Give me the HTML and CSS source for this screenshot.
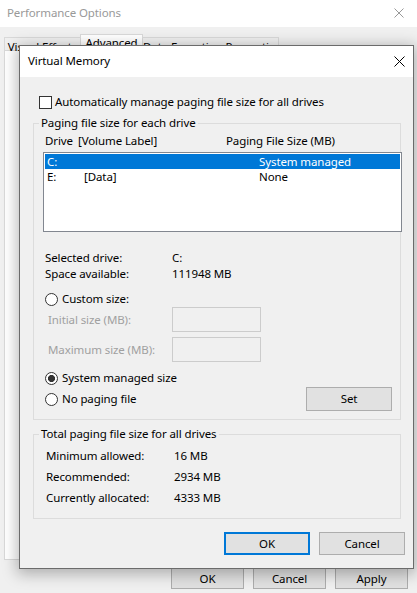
FILE: index.html
```html
<!DOCTYPE html>
<html>
<head>
<meta charset="utf-8">
<link rel="stylesheet" href="styles.css">
</head>
<body>
<div class="po">
  <div class="po-title">
    <span>Performance Options</span>
    <svg class="x-icon po-x" width="10" height="10" viewBox="0 0 10 10"><path d="M0.5 0.5 L9.5 9.5 M9.5 0.5 L0.5 9.5"/></svg>
  </div>
  <div class="po-tabs">
    <div class="tab tab-ve">Visual Effects</div>
    <div class="tab tab-sel">Advanced</div>
    <div class="tab tab-dep">Data Execution Prevention</div>
  </div>
  <div class="po-panel"></div>
  <div class="po-buttons">
    <div class="btn po-btn">OK</div>
    <div class="btn po-btn">Cancel</div>
    <div class="btn po-btn">Apply</div>
  </div>
</div>

<div class="vm">
  <div class="vm-title">
    <span>Virtual Memory</span>
    <svg class="x-icon vm-x" width="11" height="11" viewBox="0 0 11 11"><path d="M0.5 0.5 L10.5 10.5 M10.5 0.5 L0.5 10.5"/></svg>
  </div>
  <div class="vm-body">
    <div class="check-row">
      <span class="checkbox"></span>
      <span>Automatically manage paging file size for all drives</span>
    </div>

    <fieldset class="group g1">
      <legend>Paging file size for each drive</legend>
      <div class="list-head">
        <span class="col-drive">Drive</span>
        <span class="col-label">[Volume Label]</span>
        <span>Paging File Size (MB)</span>
      </div>
      <div class="listbox">
        <div class="lrow lrow-sel">
          <span class="c1">C:</span><span class="c2"></span><span>System managed</span>
        </div>
        <div class="lrow">
          <span class="c1">E:</span><span class="c2">[Data]</span><span>None</span>
        </div>
      </div>

      <div class="info">
        <div class="info-row"><span class="info-label">Selected drive:</span><span>C:</span></div>
        <div class="info-row"><span class="info-label">Space available:</span><span>111948 MB</span></div>
      </div>

      <div class="radio-row r-custom">
        <span class="radio"></span><span>Custom size:</span>
      </div>
      <div class="size-row">
        <span class="size-label">Initial size (MB):</span><span class="tbox"></span>
      </div>
      <div class="size-row size-row2">
        <span class="size-label">Maximum size (MB):</span><span class="tbox"></span>
      </div>
      <div class="radio-row r-sys">
        <span class="radio radio-on"></span><span>System managed size</span>
      </div>
      <div class="last-row">
        <div class="radio-row">
          <span class="radio"></span><span>No paging file</span>
        </div>
        <div class="btn set-btn">Set</div>
      </div>
    </fieldset>

    <fieldset class="group g2">
      <legend>Total paging file size for all drives</legend>
      <div class="tot-rows">
        <div class="tot-row"><span class="tot-label">Minimum allowed:</span><span>16 MB</span></div>
        <div class="tot-row"><span class="tot-label">Recommended:</span><span>2934 MB</span></div>
        <div class="tot-row"><span class="tot-label">Currently allocated:</span><span>4333 MB</span></div>
      </div>
    </fieldset>

    <div class="vm-buttons">
      <div class="btn vm-btn btn-default">OK</div>
      <div class="btn vm-btn">Cancel</div>
    </div>
  </div>
</div>
</body>
</html>
```

FILE: styles.css
```css
* { box-sizing: border-box; }

html, body {
  margin: 0;
  padding: 0;
}

body {
  width: 417px;
  height: 593px;
  overflow: hidden;
  background: #f0f0f0;
  font-family: "Noto Sans", "Open Sans", sans-serif;
  font-size: 11.5px;
  letter-spacing: -0.1px;
  line-height: 16px;
  color: #000;
  position: relative;
}

/* ---------- background window ---------- */
.po {
  display: flex;
  flex-direction: column;
  height: 593px;
}

.po-title {
  height: 27px;
  background: #fff;
  display: flex;
  align-items: center;
  justify-content: space-between;
  padding: 0 13px 2px 7px;
  color: #999;
}

.x-icon path {
  fill: none;
  stroke-width: 1;
}
.po-x path { stroke: #999; }
.vm-x path { stroke: #000; }

.po-tabs {
  display: flex;
  align-items: flex-end;
  height: 16px;
  margin-top: 7px;
  padding-left: 4px;
  position: relative;
  z-index: 1;
}

.tab {
  height: 13px;
  border: 1px solid #d9d9d9;
  border-bottom: none;
  background: #f0f0f0;
  text-align: center;
  line-height: 16px;
  padding-top: 1px;
  white-space: nowrap;
}
.tab-ve { width: 76px; border-right: none; }
.tab-sel {
  width: 63px;
  height: 17px;
  margin-bottom: -1px;
  background: #fff;
  padding-top: 0;
}
.tab-dep { width: 136px; border-left: none; }

.po-panel {
  height: 510px;
  margin: 0 6px 0 4px;
  background: #fff;
  border: 1px solid #d9d9d9;
}

.po-buttons {
  display: flex;
  justify-content: flex-end;
  gap: 9px;
  margin-top: 8px;
  padding-right: 9px;
}

.btn {
  background: #e1e1e1;
  border: 1px solid #adadad;
  display: flex;
  align-items: center;
  justify-content: center;
}

.po-btn {
  width: 73px;
  height: 21px;
}

/* ---------- Virtual Memory dialog ---------- */
.vm {
  position: absolute;
  z-index: 2;
  left: 19px;
  top: 45px;
  width: 395px;
  border: 1px solid #6b6b6b;
  background: #f0f0f0;
  box-shadow: 0 3px 14px 2px rgba(0, 0, 0, 0.28);
}

.vm-title {
  height: 31px;
  background: #fff;
  display: flex;
  align-items: center;
  justify-content: space-between;
  padding: 0 8px 1px 8px;
}

.vm-body {
  padding: 17px 0 13px 0;
}

.check-row {
  display: flex;
  align-items: center;
  gap: 3px;
  height: 16px;
  margin-left: 19px;
}

.checkbox {
  width: 13px;
  height: 13px;
  border: 1px solid #333;
  background: #fff;
}

.group {
  margin: 0 12px 0 13px;
  padding: 0;
  border: 1px solid #dcdcdc;
  min-width: 0;
}

.group legend {
  padding: 0 2px;
  margin-left: 5px;
  line-height: 16px;
}

.g1 {
  margin-top: 5px;
  padding-bottom: 8px;
}

.list-head {
  display: flex;
  margin: 2px 0 0 11px;
  height: 16px;
}
.col-drive { width: 33px; }
.col-label { width: 148px; }

.listbox {
  margin: 3px 0 0 9px;
  width: 359px;
  height: 80px;
  border: 1px solid #828790;
  background: #fff;
  padding: 1px;
}

.lrow {
  display: flex;
  height: 15px;
  line-height: 15px;
  padding-left: 2px;
}
.lrow-sel {
  background: #0078d7;
  color: #fff;
}
.lrow .c1 { width: 37px; }
.lrow .c2 { width: 175px; }

.info {
  margin: 18px 0 0 11px;
}
.info-row {
  display: flex;
  height: 16px;
}
.info-label { width: 127px; }

.radio-row {
  display: flex;
  align-items: center;
  gap: 4px;
  height: 16px;
}
.r-custom { margin: 9px 0 0 11px; }
.r-sys { margin: 8px 0 0 11px; }

.radio {
  width: 13px;
  height: 13px;
  border: 1px solid #333;
  border-radius: 50%;
  background: #fff;
}
.radio-on {
  background: radial-gradient(circle, #333 0, #333 3.3px, #fff 3.8px);
}

.size-row {
  display: flex;
  align-items: center;
  height: 25px;
  margin-left: 14px;
  color: #a0a0a0;
}
.size-row2 { margin-top: 5px; }
.size-label { width: 124px; }
.tbox {
  width: 89px;
  height: 25px;
  border: 1px solid #cccccc;
  background: #f0f0f0;
}

.last-row {
  display: flex;
  align-items: center;
  justify-content: space-between;
  height: 24px;
  margin: 1px 8px 0 11px;
}

.set-btn {
  width: 86px;
  height: 24px;
}

.g2 {
  margin-top: 6px;
  padding-bottom: 10px;
}

.tot-rows {
  margin: 3px 0 0 12px;
}
.tot-row {
  display: flex;
  align-items: center;
  height: 21px;
}
.tot-label { width: 128px; }

.vm-buttons {
  display: flex;
  justify-content: flex-end;
  gap: 9px;
  margin: 13px 8px 0 0;
}

.vm-btn {
  width: 86px;
  height: 23px;
}

.btn-default {
  border: 2px solid #0078d7;
}
```
